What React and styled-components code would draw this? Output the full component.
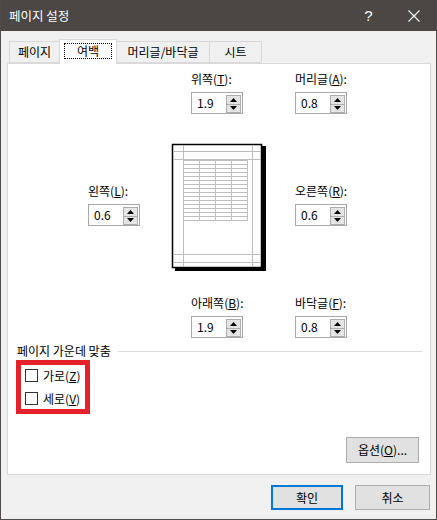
import React from 'react';
import styled, { createGlobalStyle } from 'styled-components';

const Global = createGlobalStyle`
  html, body { margin: 0; padding: 0; background: #f0f0f0; }
  body {
    font-family: "Noto Sans CJK KR", "Noto Sans", sans-serif;
    font-size: 12px;
    color: #000;
  }
  u { text-decoration: underline; text-underline-offset: 1px; }
`;

const Window = styled.div`
  width: 437px;
  height: 520px;
  box-sizing: border-box;
  background: #f0f0f0;
  border: 1px solid #4f4c49;
  border-top: none;
  display: flex;
  flex-direction: column;
`;

const TitleBar = styled.div`
  height: 31px;
  flex: none;
  background: #4a4744;
  color: #fff;
  display: flex;
  align-items: center;
  padding-left: 8px;
  font-size: 12.5px;
  line-height: 16px;
`;

const TitleText = styled.div`
  flex: 1;
`;

const TitleButton = styled.div`
  width: 45px;
  height: 31px;
  display: flex;
  align-items: center;
  justify-content: center;
  color: #fff;
  font-family: "Liberation Sans", sans-serif;
  font-size: 15px;
`;

const TabRow = styled.div`
  display: flex;
  align-items: flex-end;
  height: 24px;
  margin-top: 8px;
  padding-left: 8px;
  position: relative;
  z-index: 2;
`;

const Tab = styled.div`
  box-sizing: border-box;
  width: ${p => p.$w}px;
  height: ${p => (p.$active ? 25 : 22)}px;
  margin-bottom: ${p => (p.$active ? -1 : 0)}px;
  margin-left: ${p => (p.$first ? 0 : -1)}px;
  border: 1px solid #d9d9d9;
  border-bottom: ${p => (p.$active ? 'none' : '1px solid #d9d9d9')};
  background: ${p => (p.$active ? '#fff' : '#f0f0f0')};
  display: flex;
  align-items: ${p => (p.$active ? 'stretch' : 'center')};
  justify-content: center;
  line-height: 16px;
  padding: ${p => (p.$active ? '3px 4px 5px' : '0 0 1px')};
  position: relative;
  z-index: ${p => (p.$active ? 2 : 1)};
`;

const FocusRect = styled.div`
  flex: 1;
  border: 1px dotted #000;
  display: flex;
  align-items: center;
  justify-content: center;
`;

const Panel = styled.div`
  box-sizing: border-box;
  width: 424px;
  height: 412px;
  margin-left: 6px;
  border: 1px solid #d9d9d9;
  background: #fff;
  display: flex;
  flex-direction: column;
  position: relative;
  z-index: 1;
`;

const MarginGrid = styled.div`
  display: grid;
  grid-template-columns: 52px 91px 52px;
  column-gap: 32px;
  margin-top: 7px;
  padding-left: 80px;
`;

const FieldWrap = styled.div`
  grid-column: ${p => p.$col};
  grid-row: ${p => p.$row};
  display: flex;
  flex-direction: column;
  align-items: flex-start;
  margin-left: ${p => p.$ml || 0}px;
  margin-top: ${p => p.$mt || 0}px;
  white-space: nowrap;
`;

const FieldLabel = styled.div`
  line-height: 16px;
  height: 16px;
  margin-bottom: 5px;
`;

const SpinBox = styled.div`
  box-sizing: border-box;
  width: 52px;
  height: 22px;
  border: 1px solid #a9a9a9;
  background: #fff;
  display: flex;
  align-items: center;
`;

const SpinValue = styled.div`
  flex: 1;
  padding-left: 5px;
  line-height: 16px;
`;

const SpinButtons = styled.div`
  box-sizing: border-box;
  width: 15px;
  height: 18px;
  margin: 2px 1px 0 0;
  align-self: flex-start;
  display: flex;
  flex-direction: column;
  border: 1px solid #acacac;
  background: #e5e5e5;
`;

const SpinBtn = styled.div`
  flex: 1;
  display: flex;
  align-items: center;
  justify-content: center;
  border-top: ${p => (p.$down ? '1px solid #acacac' : 'none')};
`;

const Preview = styled.svg`
  grid-column: 2;
  grid-row: 2;
  display: block;
  margin-top: 29px;
  overflow: visible;
`;

const GroupHeader = styled.div`
  display: flex;
  align-items: center;
  margin-top: 5px;
  padding-left: 9px;
  padding-right: 8px;
  line-height: 16px;
`;

const GroupLine = styled.div`
  flex: 1;
  height: 1px;
  background: #dcdcdc;
  margin-left: 6px;
`;

const Highlight = styled.div`
  box-sizing: border-box;
  width: 74px;
  height: 54px;
  margin: 1px 0 0 8px;
  border: 5px solid #e5212b;
  padding: 4px 0 0 4px;
  display: flex;
  flex-direction: column;
  gap: 10px;
`;

const CheckRow = styled.div`
  display: flex;
  align-items: center;
  gap: 5px;
  height: 13px;
  line-height: 16px;
  white-space: nowrap;
`;

const CheckLabel = styled.span`
  white-space: nowrap;
`;

const CheckBox = styled.div`
  box-sizing: border-box;
  width: 13px;
  height: 13px;
  border: 1px solid #333;
  background: #fff;
  flex: none;
`;

const PanelFooter = styled.div`
  display: flex;
  justify-content: flex-end;
  margin-top: 23px;
  padding-right: 11px;
`;

const Button = styled.div`
  box-sizing: border-box;
  width: ${p => p.$w}px;
  height: ${p => p.$h || 25}px;
  background: #e1e1e1;
  border: ${p => (p.$primary ? '2px solid #0078d7' : '1px solid #adadad')};
  display: flex;
  align-items: center;
  justify-content: center;
  line-height: 16px;
  white-space: nowrap;
`;

const DialogFooter = styled.div`
  display: flex;
  justify-content: flex-end;
  gap: 12px;
  margin-top: 10px;
  padding-right: 6px;
`;

const Up = () => (
  <svg width="7" height="4" viewBox="0 0 7 4"><path d="M3.5 0 L7 4 L0 4 Z" fill="#000" /></svg>
);
const Down = () => (
  <svg width="7" height="4" viewBox="0 0 7 4"><path d="M0 0 L7 0 L3.5 4 Z" fill="#000" /></svg>
);

const Field = ({ label, mn, value, col, row, ml, mt }) => (
  <FieldWrap $col={col} $row={row} $ml={ml} $mt={mt}>
    <FieldLabel>
      {label}(<u>{mn}</u>):
    </FieldLabel>
    <SpinBox>
      <SpinValue>{value}</SpinValue>
      <SpinButtons>
        <SpinBtn><Up /></SpinBtn>
        <SpinBtn $down><Down /></SpinBtn>
      </SpinButtons>
    </SpinBox>
  </FieldWrap>
);

const PagePreview = () => {
  const rows = [];
  for (let i = 0; i <= 15; i++) rows.push(17.5 + i * 4);
  const cols = [11.5, 27.5, 43.5, 59.5, 75.5];
  const g = '#bdbdbd';
  return (
    <Preview width="94" height="128" viewBox="0 0 94 128">
      <rect x="3" y="3" width="91" height="125" fill="#000" />
      <rect x="0.5" y="1.5" width="89" height="123" fill="#fff" stroke="#000" strokeWidth="1.5" />
      <line x1="11.5" y1="2" x2="11.5" y2="124" stroke={g} />
      <line x1="80.5" y1="2" x2="80.5" y2="124" stroke={g} />
      <line x1="1" y1="8.5" x2="89" y2="8.5" stroke={g} />
      <line x1="1" y1="16.5" x2="89" y2="16.5" stroke={g} />
      <line x1="1" y1="111.5" x2="89" y2="111.5" stroke={g} />
      <line x1="1" y1="119.5" x2="89" y2="119.5" stroke={g} />
      {rows.map(y => (
        <line key={'r' + y} x1="11.5" y1={y} x2="75.5" y2={y} stroke={g} />
      ))}
      {cols.map(x => (
        <line key={'c' + x} x1={x} y1="17.5" x2={x} y2="77.5" stroke={g} />
      ))}
    </Preview>
  );
};

export default function App() {
  return (
    <>
      <Global />
      <Window>
        <TitleBar>
          <TitleText>페이지 설정</TitleText>
          <TitleButton>?</TitleButton>
          <TitleButton>
            <svg width="12" height="12" viewBox="0 0 12 12">
              <path d="M0.5 0.5 L11.5 11.5 M11.5 0.5 L0.5 11.5" stroke="#fff" strokeWidth="1.1" />
            </svg>
          </TitleButton>
        </TitleBar>
        <TabRow>
          <Tab $w={51} $first>페이지</Tab>
          <Tab $w={58} $active><FocusRect>여백</FocusRect></Tab>
          <Tab $w={94}>머리글/바닥글</Tab>
          <Tab $w={53}>시트</Tab>
        </TabRow>
        <Panel>
          <MarginGrid>
            <Field label="위쪽" mn="T" value="1.9" col={2} row={1} ml={19} />
            <Field label="머리글" mn="A" value="0.8" col={3} row={1} />
            <Field label="왼쪽" mn="L" value="0.6" col={1} row={2} mt={69} />
            <PagePreview />
            <Field label="오른쪽" mn="R" value="0.6" col={3} row={2} mt={69} />
            <Field label="아래쪽" mn="B" value="1.9" col={2} row={3} ml={19} mt={24} />
            <Field label="바닥글" mn="F" value="0.8" col={3} row={3} mt={24} />
          </MarginGrid>
          <GroupHeader>
            페이지 가운데 맞춤
            <GroupLine />
          </GroupHeader>
          <Highlight>
            <CheckRow><CheckBox /><CheckLabel>가로(<u>Z</u>)</CheckLabel></CheckRow>
            <CheckRow><CheckBox /><CheckLabel>세로(<u>V</u>)</CheckLabel></CheckRow>
          </Highlight>
          <PanelFooter>
            <Button $w={73} $h={26}>옵션(<u>O</u>)...</Button>
          </PanelFooter>
        </Panel>
        <DialogFooter>
          <Button $w={72} $primary>확인</Button>
          <Button $w={75}>취소</Button>
        </DialogFooter>
      </Window>
    </>
  );
}
